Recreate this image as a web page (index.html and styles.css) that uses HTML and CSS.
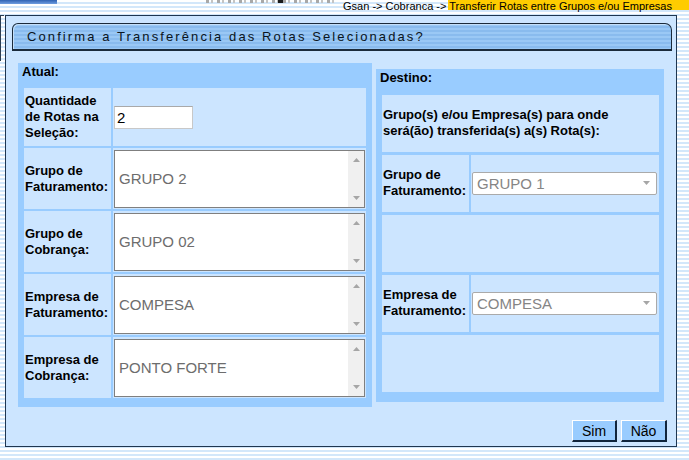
FILE: index.html
```html
<!DOCTYPE html>
<html lang="pt">
<head>
<meta charset="utf-8">
<title>Transferir Rotas</title>
<link rel="stylesheet" href="styles.css">
</head>
<body>
<div class="topbar">
  <div class="brand"></div>
  <div class="stub"></div>
  <div class="crumb">Gsan -&gt; Cobranca -&gt; Transferir Rotas entre Grupos e/ou Empresas</div>
</div>
<div class="main">
  <div class="edge"></div>
  <div class="panel">
    <div class="title"><h1>Confirma a Transferência das Rotas Selecionadas?</h1></div>
    <div class="content">
      <div class="box box-atual">
        <div class="box-head">Atual:</div>
        <div class="grid grid-atual">
          <div class="cell label">Quantidade de Rotas na Seleção:</div>
          <div class="cell value"><input class="qty" type="text" value="2"></div>

          <div class="cell label">Grupo de Faturamento:</div>
          <div class="cell value">
            <div class="listbox"><div class="opt">GRUPO 2</div><div class="scroll"><svg width="7" height="4" viewBox="0 0 7 4"><polygon points="0,4 7,4 3.5,0" fill="#a6a6a6"/></svg><svg width="7" height="4" viewBox="0 0 7 4"><polygon points="0,0 7,0 3.5,4" fill="#a6a6a6"/></svg></div></div>
          </div>

          <div class="cell label">Grupo de Cobrança:</div>
          <div class="cell value">
            <div class="listbox"><div class="opt">GRUPO 02</div><div class="scroll"><svg width="7" height="4" viewBox="0 0 7 4"><polygon points="0,4 7,4 3.5,0" fill="#a6a6a6"/></svg><svg width="7" height="4" viewBox="0 0 7 4"><polygon points="0,0 7,0 3.5,4" fill="#a6a6a6"/></svg></div></div>
          </div>

          <div class="cell label">Empresa de Faturamento:</div>
          <div class="cell value">
            <div class="listbox"><div class="opt">COMPESA</div><div class="scroll"><svg width="7" height="4" viewBox="0 0 7 4"><polygon points="0,4 7,4 3.5,0" fill="#a6a6a6"/></svg><svg width="7" height="4" viewBox="0 0 7 4"><polygon points="0,0 7,0 3.5,4" fill="#a6a6a6"/></svg></div></div>
          </div>

          <div class="cell label">Empresa de Cobrança:</div>
          <div class="cell value">
            <div class="listbox"><div class="opt">PONTO FORTE</div><div class="scroll"><svg width="7" height="4" viewBox="0 0 7 4"><polygon points="0,4 7,4 3.5,0" fill="#a6a6a6"/></svg><svg width="7" height="4" viewBox="0 0 7 4"><polygon points="0,0 7,0 3.5,4" fill="#a6a6a6"/></svg></div></div>
          </div>
        </div>
      </div>

      <div class="box box-destino">
        <div class="box-head">Destino:</div>
        <div class="grid grid-destino">
          <div class="cell label wide">Grupo(s) e/ou Empresa(s) para onde será(ão) transferida(s) a(s) Rota(s):</div>

          <div class="cell label">Grupo de Faturamento:</div>
          <div class="cell value">
            <div class="select"><span>GRUPO 1</span><svg width="7" height="4" viewBox="0 0 7 4"><polygon points="0,0 7,0 3.5,4" fill="#a6a6a6"/></svg></div>
          </div>

          <div class="cell wide"></div>

          <div class="cell label">Empresa de Faturamento:</div>
          <div class="cell value">
            <div class="select"><span>COMPESA</span><svg width="7" height="4" viewBox="0 0 7 4"><polygon points="0,0 7,0 3.5,4" fill="#a6a6a6"/></svg></div>
          </div>

          <div class="cell wide"></div>
        </div>
      </div>
    </div>
    <div class="actions">
      <button class="btn btn-sim" type="button">Sim</button>
      <button class="btn btn-nao" type="button">Não</button>
    </div>
  </div>
</div>
</body>
</html>
```

FILE: styles.css
```css
* { box-sizing: border-box; }
html, body { margin: 0; padding: 0; }
body {
  width: 689px;
  height: 460px;
  overflow: hidden;
  font-family: "Liberation Sans", Arial, sans-serif;
  background: repeating-linear-gradient(180deg, #ffffff 0 2px, #d3e7fa 2px 4px);
}

.topbar {
  display: flex;
  align-items: flex-start;
  height: 15px;
  background: linear-gradient(#ffcc00, #ffcc00) right top / 241px 10px no-repeat;
}
.brand {
  width: 57px;
  height: 4px;
  background: linear-gradient(#2f62b3, #6f9de0);
}
.stub {
  margin-left: 149px;
  width: 128px;
  height: 3px;
  background:
    linear-gradient(90deg, transparent 0 72px, #1a1a1a 72px 77px, transparent 77px),
    repeating-linear-gradient(90deg, #a8a8a8 0 3px, transparent 3px 5px, #c4c4c4 5px 7px, transparent 7px 11px);
}
.crumb {
  margin-left: auto;
  margin-right: 17px;
  font-size: 11px;
  line-height: 12px;
  color: #000;
  white-space: nowrap;
}

.main { display: flex; align-items: flex-start; }
.edge {
  width: 4px;
  height: 46px;
  margin-right: 1px;
  border-left: 1px solid #2b3d50;
  border-top: 1px solid #2b3d50;
}
.panel {
  width: 672px;
  height: 432px;
  border: 1px solid #1f3650;
  background: #cce5ff;
  padding: 7px 4px 0 6px;
  display: flex;
  flex-direction: column;
}

.title {
  height: 28px;
  border: 1px solid #1b2b3b;
  border-bottom-width: 2px;
  border-radius: 6px 7px 0 0;
  background: repeating-linear-gradient(180deg, #9ac8f5 0 2px, #89bbee 2px 4px);
  box-shadow: inset 1px 1px 0 #c4dff9;
  padding-left: 14px;
  display: flex;
  align-items: center;
}
.title h1 {
  margin: 0;
  font-size: 13px;
  font-weight: normal;
  letter-spacing: 2.1px;
  color: #0a1420;
  white-space: nowrap;
}

.content {
  display: flex;
  align-items: center;
  gap: 4px;
  margin: 12px 0 0 6px;
}
.box { background: #99ccff; }
.box-atual { width: 354px; padding: 0 6px 9px; }
.box-destino { width: 288px; padding: 0 5px 10px 6px; }
.box-head {
  font-weight: bold;
  font-size: 13px;
  line-height: 16px;
  margin-left: -2px;
  padding-top: 1px;
  color: #000;
}
.box-atual .box-head { height: 25px; }
.box-destino .box-head { height: 26px; }

.grid { display: grid; }
.grid-atual {
  grid-template-columns: 87px 253px;
  grid-template-rows: 58px repeat(4, 61px);
  gap: 2px;
}
.grid-destino {
  grid-template-columns: 87px 188px;
  grid-template-rows: repeat(5, 57px);
  gap: 3px 2px;
}
.cell {
  background: #cce5ff;
  display: flex;
  align-items: center;
}
.wide { grid-column: 1 / -1; }
.label {
  font-weight: bold;
  font-size: 13px;
  line-height: 16px;
  padding: 0 1px;
  color: #000;
}
.value { padding-left: 1px; }

.qty {
  width: 79px;
  height: 23px;
  margin: 0;
  border: 1px solid #c8c8c8;
  border-top-color: #a9a9a9;
  background: #fff;
  padding: 0 2px;
  font-family: "Liberation Sans", Arial, sans-serif;
  font-size: 15px;
  color: #000;
  outline: none;
}

.listbox {
  width: 251px;
  height: 58px;
  border: 1px solid #7f7f7f;
  background: #fff;
  display: flex;
}
.opt {
  flex: 1;
  display: flex;
  align-items: center;
  padding-left: 4px;
  font-size: 15px;
  color: #6d6d6d;
}
.scroll {
  width: 16px;
  background: #f0f0f0;
  display: flex;
  flex-direction: column;
  justify-content: space-between;
  align-items: center;
  padding: 7px 0;
}
.scroll svg { display: block; }

.select {
  width: 185px;
  height: 23px;
  border: 1px solid #aaaaaa;
  border-radius: 2px;
  background: #fff;
  display: flex;
  align-items: center;
  justify-content: space-between;
  padding: 0 6px 0 4px;
  font-size: 15px;
  color: #858585;
}
.select svg { display: block; }

.actions {
  display: flex;
  justify-content: flex-end;
  gap: 4px;
  margin-top: 13px;
  padding-right: 5px;
}
.btn {
  height: 22px;
  margin: 0;
  padding: 0;
  font-family: "Liberation Sans", Arial, sans-serif;
  font-size: 14px;
  color: #000;
  background: #99ccff;
  border-style: solid;
  border-width: 1px 2px 2px 1px;
  border-color: #ffffff #10253d #10253d #ffffff;
}
.btn-sim { width: 45px; }
.btn-nao { width: 46px; }
```
